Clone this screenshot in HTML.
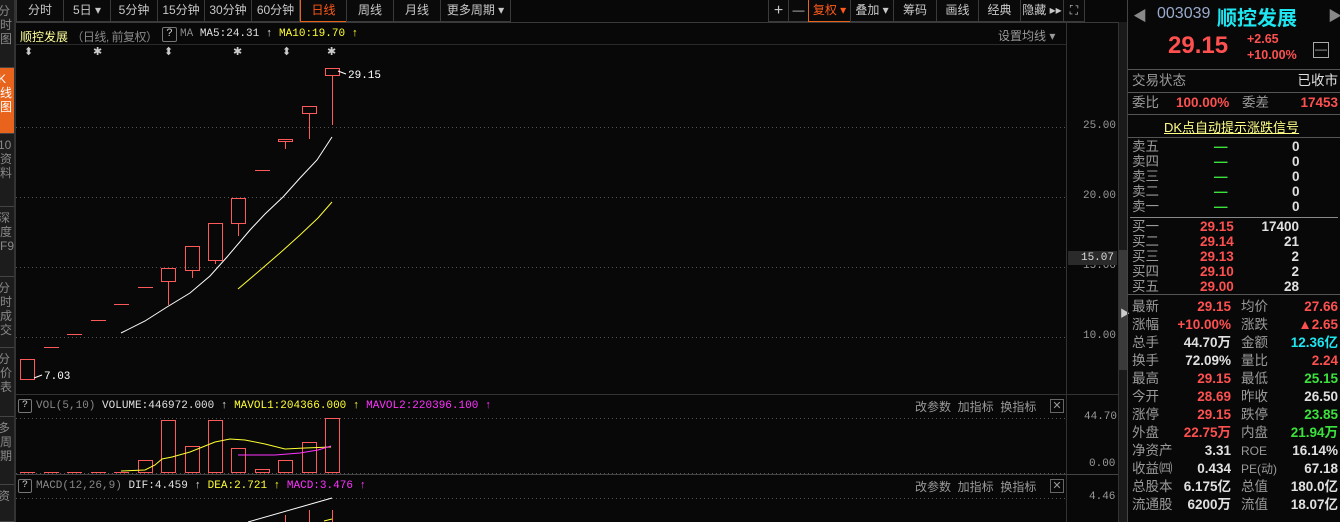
<!DOCTYPE html>
<html><head><meta charset="utf-8"><style>
*{margin:0;padding:0;box-sizing:border-box}
body{width:1340px;height:522px;background:#080808;overflow:hidden;position:relative;font-family:"Liberation Sans","Noto Sans CJK SC",sans-serif;font-size:12px;color:#c8c8c8}
.a{position:absolute;white-space:nowrap}
.tb{position:absolute;top:0;height:22px;border:1px solid #3a3a3a;border-top:none;color:#c8c8c8;font-size:12px;text-align:center;line-height:21px;background:#0a0a0a}
.or{border:1px solid #e8641c;border-top:none;color:#ff5a1a}
.side{position:absolute;left:0;width:14px;background:#1c1c1c;color:#888;font-size:12px;line-height:14px;overflow:hidden;border-bottom:1px solid #444;padding-top:4px;text-indent:-2px}
.m{font-family:"Liberation Mono","Noto Sans CJK SC",monospace}
.row{position:absolute;left:1132px;width:206px;height:16px;font-size:13.5px;line-height:16px}
.row span{position:absolute;top:0}
.row span:not(.gy){font-weight:bold}
.r{color:#ff5050}.g{color:#3ce23c}.w{color:#e0e0e0}.gy{color:#9a9a9a}.c{color:#1ee6f0}.y{color:#ffff33}
.hl{position:absolute;left:1128px;width:212px;height:1px;background:#555}
</style></head><body>

<div class="side" style="top:0;height:68px">分<br>时<br>图</div>
<div class="side" style="top:68px;height:66px;background:#e8641c;color:#fff">K<br>线<br>图</div>
<div class="side" style="top:134px;height:73px">10<br>资<br>料</div>
<div class="side" style="top:207px;height:70px">深<br>度<br>F9</div>
<div class="side" style="top:277px;height:71px">分<br>时<br>成<br>交</div>
<div class="side" style="top:348px;height:69px">分<br>价<br>表</div>
<div class="side" style="top:417px;height:68px">多<br>周<br>期</div>
<div class="side" style="top:485px;height:37px">资</div>
<div class="a" style="left:14px;top:0;width:2px;height:522px;background:#333"></div>

<div class="tb" style="left:16px;width:48px">分时</div>
<div class="tb" style="left:63px;width:48px">5日 ▾</div>
<div class="tb" style="left:110px;width:48px">5分钟</div>
<div class="tb" style="left:157px;width:48px">15分钟</div>
<div class="tb" style="left:204px;width:48px">30分钟</div>
<div class="tb" style="left:251px;width:49px">60分钟</div>
<div class="tb or" style="left:300px;width:47px">日线</div>
<div class="tb" style="left:346px;width:48px">周线</div>
<div class="tb" style="left:393px;width:48px">月线</div>
<div class="tb" style="left:440px;width:71px">更多周期 ▾</div>
<div class="tb" style="left:768px;width:21px;font-size:16px">+</div>
<div class="tb" style="left:788px;width:21px">—</div>
<div class="tb or" style="left:808px;width:43px">复权 ▾</div>
<div class="tb" style="left:850px;width:44px">叠加 ▾</div>
<div class="tb" style="left:893px;width:44px">筹码</div>
<div class="tb" style="left:936px;width:43px">画线</div>
<div class="tb" style="left:978px;width:43px">经典</div>
<div class="tb" style="left:1020px;width:44px">隐藏 ▸▸</div>
<div class="tb" style="left:1063px;width:22px">⛶</div>
<div class="a" style="left:16px;top:22px;width:1102px;height:1px;background:#3a3a3a"></div>

<div class="a" style="left:20px;top:28px;font-size:12px;color:#ffff99">顺控发展 <span style="color:#888;letter-spacing:-0.5px">（日线, 前复权）</span></div>
<div class="a m" style="left:162px;top:27px;width:15px;height:15px;border:1px solid #777;border-radius:2px;font-size:11px;text-align:center;line-height:13px;color:#ccc">?</div>
<div class="a m" style="left:180px;top:28px;font-size:11px"><span style="color:#888">MA</span> <span class="w">MA5:24.31 ↑</span> <span class="y">MA10:19.70 ↑</span></div>
<div class="a" style="left:998px;top:27px;color:#999;font-size:12px">设置均线 ▾</div>
<div class="a" style="left:16px;top:44px;width:1050px;height:1px;background:#2a2a2a"></div>
<div class="a" style="left:24px;top:45px;font-size:11px;color:#ccc">⬍</div>
<div class="a" style="left:93px;top:45px;font-size:11px;color:#ccc">✱</div>
<div class="a" style="left:164px;top:45px;font-size:11px;color:#ccc">⬍</div>
<div class="a" style="left:233px;top:45px;font-size:11px;color:#ccc">✱</div>
<div class="a" style="left:282px;top:45px;font-size:11px;color:#ccc">⬍</div>
<div class="a" style="left:327px;top:45px;font-size:11px;color:#ccc">✱</div>

<div class="a" style="left:1066px;top:22px;width:1px;height:500px;background:#333"></div>
<div class="a" style="left:1118px;top:22px;width:10px;height:500px;background:#1a1a1a;border-left:1px solid #333;border-right:1px solid #333"></div>
<div class="a" style="left:1119px;top:250px;width:8px;height:120px;background:#3a3a3a"></div>
<div class="a" style="left:1120px;top:305px;color:#ccc;font-size:10px">▶</div>
<div class="a m" style="left:1083px;top:120px;font-size:11px;color:#999">25.00</div>
<div class="a m" style="left:1083px;top:190px;font-size:11px;color:#999">20.00</div>
<div class="a m" style="left:1083px;top:260px;font-size:11px;color:#999">15.00</div>
<div class="a m" style="left:1068px;top:251px;width:49px;height:14px;background:#2a2a2a;font-size:11px;color:#ddd;text-align:right;padding-right:3px;line-height:14px">15.07</div>
<div class="a m" style="left:1083px;top:330px;font-size:11px;color:#999">10.00</div>
<div class="a m" style="left:1084px;top:411px;font-size:11px;color:#999">44.70</div>
<div class="a m" style="left:1089px;top:458px;font-size:11px;color:#999">0.00</div>
<div class="a m" style="left:1089px;top:491px;font-size:11px;color:#999">4.46</div>

<div class="a" style="left:16px;top:394px;width:1102px;height:1px;background:#333"></div>
<div class="a" style="left:16px;top:474px;width:1102px;height:1px;background:#444"></div>

<div class="a m" style="left:18px;top:399px;width:14px;height:14px;border:1px solid #777;border-radius:2px;font-size:10px;text-align:center;line-height:12px;color:#ccc">?</div>
<div class="a m" style="left:36px;top:400px;font-size:11px"><span style="color:#888">VOL(5,10)</span> <span class="w">VOLUME:446972.000 ↑</span> <span class="y">MAVOL1:204366.000 ↑</span> <span style="color:#ff33ff">MAVOL2:220396.100 ↑</span></div>
<div class="a m" style="left:18px;top:479px;width:14px;height:14px;border:1px solid #777;border-radius:2px;font-size:10px;text-align:center;line-height:12px;color:#ccc">?</div>
<div class="a m" style="left:36px;top:480px;font-size:11px"><span style="color:#888">MACD(12,26,9)</span> <span class="w">DIF:4.459 ↑</span> <span class="y">DEA:2.721 ↑</span> <span style="color:#ff33ff">MACD:3.476 ↑</span></div>
<div class="a" style="left:915px;top:398px;color:#999;font-size:12px">改参数 &nbsp;加指标 &nbsp;换指标</div>
<div class="a" style="left:1050px;top:399px;width:14px;height:14px;border:1px solid #666;color:#999;font-size:11px;text-align:center;line-height:12px">✕</div>
<div class="a" style="left:915px;top:478px;color:#999;font-size:12px">改参数 &nbsp;加指标 &nbsp;换指标</div>
<div class="a" style="left:1050px;top:479px;width:14px;height:14px;border:1px solid #666;color:#999;font-size:11px;text-align:center;line-height:12px">✕</div>

<svg class="a" style="left:0;top:0" width="1118" height="522" shape-rendering="crispEdges">
<g stroke="#555" stroke-dasharray="1,3">
<line x1="16" y1="127.5" x2="1066" y2="127.5"/><line x1="16" y1="197.5" x2="1066" y2="197.5"/>
<line x1="16" y1="267.5" x2="1066" y2="267.5"/><line x1="16" y1="337.5" x2="1066" y2="337.5"/>
<line x1="16" y1="418.5" x2="1066" y2="418.5"/><line x1="16" y1="473.5" x2="1066" y2="473.5"/>
<line x1="16" y1="498.5" x2="1066" y2="498.5"/>
</g>
<g stroke="#ff5a5a" fill="none">
<rect x="20.5" y="359.5" width="14" height="20"/>
<line x1="44" y1="347.5" x2="59" y2="347.5"/><line x1="67" y1="334.5" x2="82" y2="334.5"/>
<line x1="91" y1="320.5" x2="106" y2="320.5"/><line x1="114" y1="304.5" x2="129" y2="304.5"/>
<line x1="138" y1="287.5" x2="153" y2="287.5"/>
<rect x="161.5" y="268.5" width="14" height="13"/><line x1="168.5" y1="281" x2="168.5" y2="305"/>
<rect x="185.5" y="246.5" width="14" height="24"/><line x1="192.5" y1="271" x2="192.5" y2="278"/>
<rect x="208.5" y="223.5" width="14" height="37"/><line x1="215.5" y1="261" x2="215.5" y2="264"/>
<rect x="231.5" y="198.5" width="14" height="25"/><line x1="238.5" y1="224" x2="238.5" y2="236"/>
<line x1="255" y1="170.5" x2="270" y2="170.5"/>
<rect x="278.5" y="139.5" width="14" height="2"/><line x1="285.5" y1="142" x2="285.5" y2="149"/>
<rect x="302.5" y="106.5" width="14" height="7"/><line x1="309.5" y1="114" x2="309.5" y2="139"/>
<rect x="325.5" y="68.5" width="14" height="7"/><line x1="332.5" y1="76" x2="332.5" y2="125"/>
</g>
<g shape-rendering="auto" fill="none">
<polyline stroke="#fff" points="121,333 145,321 167,307 190,293 210,276 227,257 250,230 265,214 283,197 300,178 317,160 332,137"/>
<polyline stroke="#ffff33" points="238,289 258,272 280,253 300,235 318,218 332,202"/>
<polyline stroke="#fff" points="34,378 42,375"/>
<polyline stroke="#fff" points="338,71 346,74"/>
</g>
<text x="44" y="379" fill="#fff" font-size="11" font-family="Liberation Mono">7.03</text>
<text x="348" y="78" fill="#fff" font-size="11" font-family="Liberation Mono">29.15</text>
<g stroke="#ff5a5a" fill="none">
<line x1="20" y1="472.5" x2="35" y2="472.5"/><line x1="44" y1="472.5" x2="59" y2="472.5"/>
<line x1="67" y1="472.5" x2="82" y2="472.5"/><line x1="91" y1="472.5" x2="106" y2="472.5"/>
<line x1="114" y1="472.5" x2="129" y2="472.5"/>
<rect x="138.5" y="460.5" width="14" height="12"/>
<rect x="161.5" y="420.5" width="14" height="52"/>
<rect x="185.5" y="446.5" width="14" height="26"/>
<rect x="208.5" y="420.5" width="14" height="52"/>
<rect x="231.5" y="448.5" width="14" height="24"/>
<rect x="255.5" y="469.5" width="14" height="3"/>
<rect x="278.5" y="460.5" width="14" height="12"/>
<rect x="302.5" y="442.5" width="14" height="30"/>
<rect x="325.5" y="418.5" width="14" height="54"/>
<line x1="285.5" y1="515" x2="285.5" y2="522"/><line x1="309.5" y1="510" x2="309.5" y2="522"/><line x1="332.5" y1="510" x2="332.5" y2="522"/>
</g>
<g shape-rendering="auto" fill="none">
<polyline stroke="#ffff33" points="121,471 145,470 155,465 162,459 172,457 190,452 200,448 215,442 230,439 245,440 265,444 285,449 305,448 331,447"/>
<polyline stroke="#ff33ff" points="238,455 275,455 300,453 318,450 331,446"/>
<polyline stroke="#fff" points="248,522 332,498"/>
<polyline stroke="#ffff33" points="324,521 332,519"/>
</g>
</svg>

<div class="a" style="left:1127px;top:0;width:1px;height:522px;background:#444"></div>
<div class="a" style="left:1133px;top:6px;color:#888;font-size:14px">◀</div>
<div class="a" style="left:1328px;top:6px;color:#888;font-size:14px">▶</div>
<div class="a" style="left:1157px;top:5px;font-size:16px;color:#9ac">003039</div>
<div class="a c" style="left:1217px;top:2px;font-size:20px;font-weight:bold">顺控发展</div>
<div class="a r" style="left:1168px;top:32px;font-size:24px;font-weight:bold">29.15</div>
<div class="a r" style="left:1247px;top:31px;font-size:12.5px;font-weight:bold;line-height:16px">+2.65<br>+10.00%</div>
<div class="a" style="left:1313px;top:42px;width:16px;height:16px;border:1px solid #aaa;color:#aaa;text-align:center;line-height:13px">—</div>
<div class="hl" style="top:69px"></div>
<div class="row" style="top:73px"><span class="gy">交易状态</span><span class="gy" style="right:0;color:#e0e0e0;font-weight:normal">已收市</span></div>
<div class="hl" style="top:92px"></div>
<div class="row" style="top:95px"><span class="gy">委比</span><span class="r" style="left:44px">100.00%</span><span class="gy" style="left:110px">委差</span><span class="r" style="right:0">17453</span></div>
<div class="hl" style="top:114px"></div>
<div class="a" style="left:1164px;top:117px;color:#ffff88;font-size:13px;text-decoration:underline">DK点自动提示涨跌信号</div>
<div class="hl" style="top:137px"></div>
<div class="row" style="top:139px"><span class="gy">卖五</span><span class="g" style="left:82px">—</span><span class="w" style="left:160px">0</span></div>
<div class="row" style="top:154px"><span class="gy">卖四</span><span class="g" style="left:82px">—</span><span class="w" style="left:160px">0</span></div>
<div class="row" style="top:169px"><span class="gy">卖三</span><span class="g" style="left:82px">—</span><span class="w" style="left:160px">0</span></div>
<div class="row" style="top:184px"><span class="gy">卖二</span><span class="g" style="left:82px">—</span><span class="w" style="left:160px">0</span></div>
<div class="row" style="top:199px"><span class="gy">卖一</span><span class="g" style="left:82px">—</span><span class="w" style="left:160px">0</span></div>
<div class="hl" style="top:217px;left:1130px;width:208px;background:#888"></div>
<div class="row" style="top:219px"><span class="gy">买一</span><span class="r" style="left:68px">29.15</span><span class="w" style="right:39px">17400</span></div>
<div class="row" style="top:234px"><span class="gy">买二</span><span class="r" style="left:68px">29.14</span><span class="w" style="right:39px">21</span></div>
<div class="row" style="top:249px"><span class="gy">买三</span><span class="r" style="left:68px">29.13</span><span class="w" style="right:39px">2</span></div>
<div class="row" style="top:264px"><span class="gy">买四</span><span class="r" style="left:68px">29.10</span><span class="w" style="right:39px">2</span></div>
<div class="row" style="top:279px"><span class="gy">买五</span><span class="r" style="left:68px">29.00</span><span class="w" style="right:39px">28</span></div>
<div class="hl" style="top:294px"></div>
<div class="row" style="top:299px"><span class="gy">最新</span><span class="r" style="right:107px">29.15</span><span class="gy" style="left:109px">均价</span><span class="r" style="right:0">27.66</span></div>
<div class="row" style="top:317px"><span class="gy">涨幅</span><span class="r" style="right:107px">+10.00%</span><span class="gy" style="left:109px">涨跌</span><span class="r" style="right:0">▲2.65</span></div>
<div class="row" style="top:335px"><span class="gy">总手</span><span class="w" style="right:107px">44.70万</span><span class="gy" style="left:109px">金额</span><span class="c" style="right:0">12.36亿</span></div>
<div class="row" style="top:353px"><span class="gy">换手</span><span class="w" style="right:107px">72.09%</span><span class="gy" style="left:109px">量比</span><span class="r" style="right:0">2.24</span></div>
<div class="row" style="top:371px"><span class="gy">最高</span><span class="r" style="right:107px">29.15</span><span class="gy" style="left:109px">最低</span><span class="g" style="right:0">25.15</span></div>
<div class="row" style="top:389px"><span class="gy">今开</span><span class="r" style="right:107px">28.69</span><span class="gy" style="left:109px">昨收</span><span class="w" style="right:0">26.50</span></div>
<div class="row" style="top:407px"><span class="gy">涨停</span><span class="r" style="right:107px">29.15</span><span class="gy" style="left:109px">跌停</span><span class="g" style="right:0">23.85</span></div>
<div class="row" style="top:425px"><span class="gy">外盘</span><span class="r" style="right:107px">22.75万</span><span class="gy" style="left:109px">内盘</span><span class="g" style="right:0">21.94万</span></div>
<div class="row" style="top:443px"><span class="gy">净资产</span><span class="w" style="right:107px">3.31</span><span class="gy" style="left:109px;font-size:12px">ROE</span><span class="w" style="right:0">16.14%</span></div>
<div class="row" style="top:461px"><span class="gy">收益㈣</span><span class="w" style="right:107px">0.434</span><span class="gy" style="left:109px;font-size:12px">PE(动)</span><span class="w" style="right:0">67.18</span></div>
<div class="row" style="top:479px"><span class="gy">总股本</span><span class="w" style="right:107px">6.175亿</span><span class="gy" style="left:109px">总值</span><span class="w" style="right:0">180.0亿</span></div>
<div class="row" style="top:497px"><span class="gy">流通股</span><span class="w" style="right:107px">6200万</span><span class="gy" style="left:109px">流值</span><span class="w" style="right:0">18.07亿</span></div>
</body></html>
